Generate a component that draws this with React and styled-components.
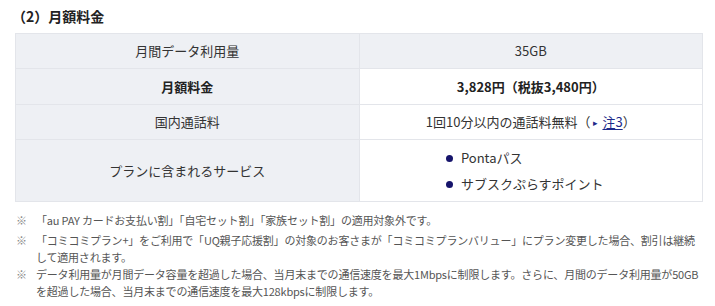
import styled, { createGlobalStyle } from 'styled-components';

const GlobalStyle = createGlobalStyle`
  body {
    margin: 0;
    background: #fff;
    font-family: "Noto Sans CJK JP", "Noto Sans", sans-serif;
    color: #333;
  }
`;

const Page = styled.div`
  padding: 6px 0 0 15px;
  width: 715px;
  box-sizing: border-box;
`;

const Heading = styled.h3`
  margin: 0 0 7px -3px;
  font-size: 14px;
  font-weight: 700;
  line-height: 20px;
  color: #222;
`;

const Table = styled.table`
  width: 688px;
  border-collapse: collapse;
  font-size: 13px;
  line-height: 18px;
`;

const Cell = styled.td`
  border: 1px solid #e3e5ea;
  background: ${(p) => (p.$head ? '#eef0f4' : '#fff')};
  text-align: center;
  width: ${(p) => (p.$head ? '343px' : 'auto')};
  height: ${(p) => p.$h || '35px'};
  padding: 0 10px;
  font-weight: ${(p) => (p.$bold ? 700 : 400)};
  color: ${(p) => (p.$bold ? '#222' : '#333')};
  vertical-align: middle;
  box-sizing: border-box;
`;

const NoteLink = styled.a`
  color: #1d2a8a;
  text-decoration: underline;
  text-underline-offset: 2px;
`;

const Arrow = styled.span`
  display: inline-block;
  color: #1d2a8a;
  font-size: 9px;
  margin: 0 4px 0 3px;
  vertical-align: 1px;
`;

const List = styled.ul`
  list-style: none;
  margin: 0 auto;
  padding: 0;
  display: inline-flex;
  flex-direction: column;
  gap: 8px;
  text-align: left;
  transform: translateX(-6px);
`;

const Item = styled.li`
  display: flex;
  align-items: center;
  gap: 8px;
`;

const Dot = styled.span`
  width: 7px;
  height: 7px;
  border-radius: 50%;
  background: #16146b;
  flex: none;
`;

const Notes = styled.div`
  margin-top: 10px;
  font-size: 11px;
  line-height: 17px;
  letter-spacing: -0.2px;
  color: #555;
`;

const Note = styled.div`
  display: flex;
  margin-bottom: ${(p) => p.$gap || '0'};
`;

const Mark = styled.span`
  flex: none;
  width: 20px;
  color: #888;
  padding-left: 1px;
`;

const NoteText = styled.span`
  flex: 1;
  padding-right: 12px;
`;

const App = () => (
  <Page>
    <GlobalStyle />
    <Heading>（2）月額料金</Heading>
    <Table>
      <tbody>
        <tr>
          <Cell $head>月間データ利用量</Cell>
          <Cell $head>35GB</Cell>
        </tr>
        <tr>
          <Cell $head $bold $h="36px">月額料金</Cell>
          <Cell $bold $h="36px">3,828円（税抜3,480円）</Cell>
        </tr>
        <tr>
          <Cell $head>国内通話料</Cell>
          <Cell>
            1回10分以内の通話料無料（<Arrow>▸</Arrow>
            <NoteLink>注3</NoteLink>）
          </Cell>
        </tr>
        <tr>
          <Cell $head $h="62px">プランに含まれるサービス</Cell>
          <Cell $h="62px">
            <List>
              <Item>
                <Dot />
                Pontaパス
              </Item>
              <Item>
                <Dot />
                サブスクぷらすポイント
              </Item>
            </List>
          </Cell>
        </tr>
      </tbody>
    </Table>
    <Notes>
      <Note $gap="3px">
        <Mark>※</Mark>
        <NoteText>「au PAY カードお支払い割」「自宅セット割」「家族セット割」の適用対象外です。</NoteText>
      </Note>
      <Note>
        <Mark>※</Mark>
        <NoteText>
          「コミコミプラン+」をご利用で「UQ親子応援割」の対象のお客さまが「コミコミプランバリュー」にプラン変更した場合、割引は継続して適用されます。
        </NoteText>
      </Note>
      <Note>
        <Mark>※</Mark>
        <NoteText>
          データ利用量が月間データ容量を超過した場合、当月末までの通信速度を最大1Mbpsに制限します。さらに、月間のデータ利用量が50GBを超過した場合、当月末までの通信速度を最大128kbpsに制限します。
        </NoteText>
      </Note>
    </Notes>
  </Page>
);

export default App;
